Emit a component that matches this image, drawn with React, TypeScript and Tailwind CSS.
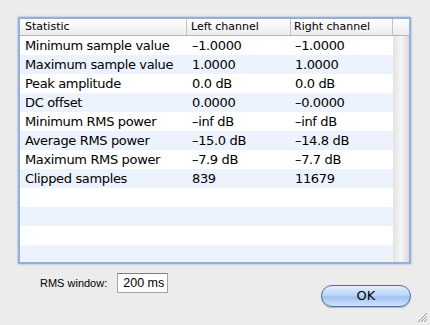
import React from "react";

type Row = { stat: string; left: string; right: string };

const rows: Row[] = [
  { stat: "Minimum sample value", left: "–1.0000", right: "–1.0000" },
  { stat: "Maximum sample value", left: "1.0000", right: "1.0000" },
  { stat: "Peak amplitude", left: "0.0 dB", right: "0.0 dB" },
  { stat: "DC offset", left: "0.0000", right: "–0.0000" },
  { stat: "Minimum RMS power", left: "–inf dB", right: "–inf dB" },
  { stat: "Average RMS power", left: "–15.0 dB", right: "–14.8 dB" },
  { stat: "Maximum RMS power", left: "–7.9 dB", right: "–7.7 dB" },
  { stat: "Clipped samples", left: "839", right: "11679" },
  { stat: "", left: "", right: "" },
  { stat: "", left: "", right: "" },
  { stat: "", left: "", right: "" },
  { stat: "", left: "", right: "" },
];

const App: React.FC = () => {
  return (
    <div
      className="relative w-[430px] h-[325px] bg-[#ececec] overflow-hidden pt-[17px] pl-[18px] pr-[19px]"
      style={{ fontFamily: '"DejaVu Sans", "Liberation Sans", sans-serif' }}
    >
      {/* table frame */}
      <div className="h-[247px] border-2 border-[#8eb1e0] bg-white overflow-hidden shadow-[0_0_2px_rgba(60,100,170,0.5)]">
        {/* header */}
        <div className="flex h-[17px] border-b border-[#b5b5b5] bg-gradient-to-b from-[#ffffff] to-[#ececec] text-[11px] text-black">
          <div className="w-[167px] pl-[5px] flex items-center border-r border-[#c2c2c2]">Statistic</div>
          <div className="w-[104px] pl-[4px] flex items-center border-r border-[#c2c2c2]">Left channel</div>
          <div className="w-[102px] pl-[3px] flex items-center border-r border-[#c2c2c2]">Right channel</div>
          <div className="flex-1" />
        </div>
        <div className="flex">
          <div className="w-[373px]">
            {rows.map((r, i) => (
              <div
                key={i}
                className={`flex h-[19px] items-center text-[13px] tracking-[-0.35px] text-black ${
                  i % 2 === 1 ? "bg-[#edf3fe]" : "bg-white"
                }`}
              >
                <div className="w-[167px] pl-[5px] whitespace-nowrap">{r.stat}</div>
                <div className="w-[104px] pl-[5px] whitespace-nowrap">{r.left}</div>
                <div className="w-[102px] pl-[4px] whitespace-nowrap">{r.right}</div>
              </div>
            ))}
          </div>
          {/* scrollbar track */}
          <div className="flex-1 bg-gradient-to-r from-[#e2e2e2] via-[#f6f6f6] to-[#dadada]" />
        </div>
      </div>

      {/* bottom controls */}
      <div className="flex items-start mt-[9px]">
        <div className="flex items-center pl-[22px] h-[20px]" style={{ fontFamily: '"Liberation Sans", sans-serif' }}>
          <span className="text-[11px] text-black whitespace-nowrap">RMS window:</span>
          <div className="ml-[10px] w-[51px] h-[20px] bg-white border border-[#a3a3a3] border-t-[#808080] flex items-center pl-[5px] text-[12.5px] text-black whitespace-nowrap">
            200 ms
          </div>
        </div>
        <button
          className="ml-auto mt-[12px] w-[90px] h-[22px] rounded-full border border-[#4f6f9c] text-[13px] text-black flex items-center justify-center shadow-[0_1px_1px_rgba(0,0,0,0.25)]"
          style={{
            background:
              "linear-gradient(to bottom, #e4effc 0%, #bcd6f7 45%, #9fc2ee 55%, #cfe4fd 100%)",
          }}
        >
          OK
        </button>
      </div>

      {/* resize grip */}
      <svg className="absolute right-[2px] bottom-[2px]" width="11" height="11" viewBox="0 0 11 11">
        <line x1="10" y1="1" x2="1" y2="10" stroke="#9a9a9a" strokeWidth="1" />
        <line x1="10" y1="4" x2="4" y2="10" stroke="#9a9a9a" strokeWidth="1" />
        <line x1="10" y1="7" x2="7" y2="10" stroke="#9a9a9a" strokeWidth="1" />
      </svg>
    </div>
  );
};

export default App;
